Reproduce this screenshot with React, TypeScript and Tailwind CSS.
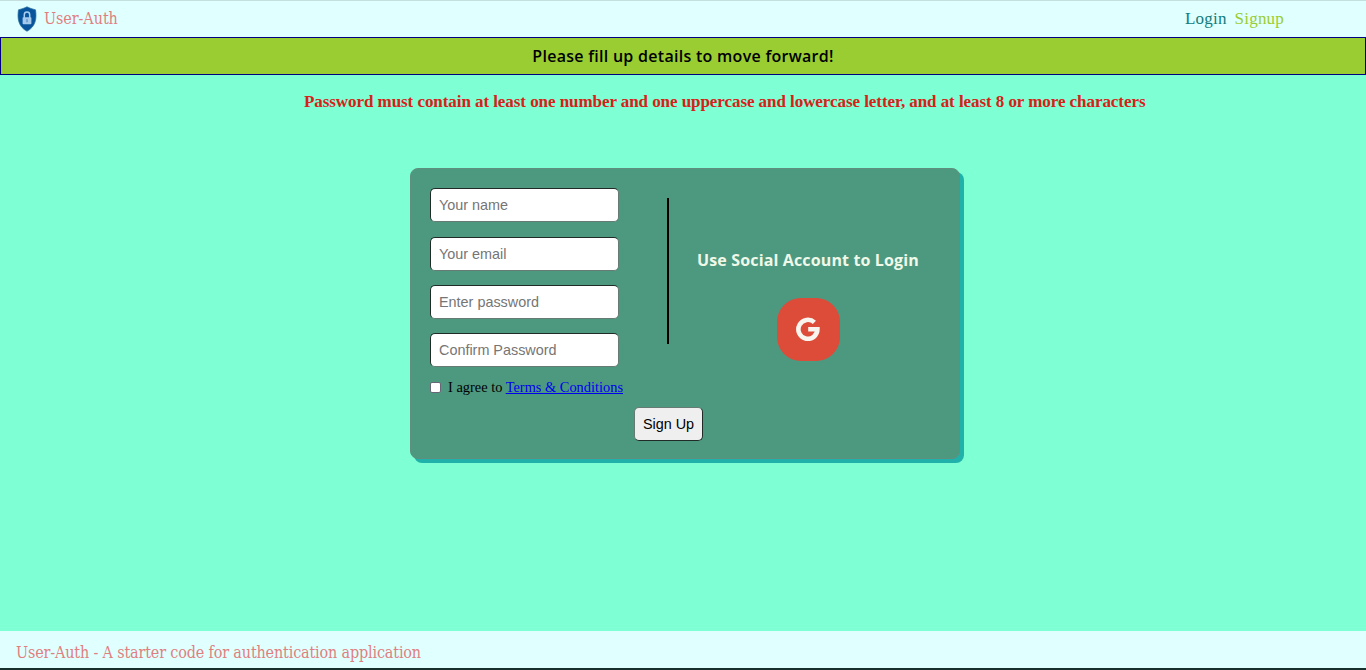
const fields = [
  { label: "Your name", type: "text", gap: "mb-[15px]" },
  { label: "Your email", type: "email", gap: "mb-[14px]" },
  { label: "Enter password", type: "password", gap: "mb-[14px]" },
  { label: "Confirm Password", type: "password", gap: "mb-[14px]" },
];

function Shield() {
  return (
    <svg width="20" height="26" viewBox="0 0 20 26" className="shrink-0">
      <path d="M10 .8C7.500 2.200 4.500 3 1.500 3.800C.2 12 1 20.500 10 25.300C19 20.500 19.800 12 18.500 3.800C15.500 3 12.500 2.200 10 .8Z" fill="#07549c" stroke="#2b6f9b" strokeWidth=".7" />
      <path d="M7.300 12V8.700a2.700 2.700 0 0 1 5.400 0V12" fill="none" stroke="#a9cff0" strokeWidth="1.500" />
      <rect x="5.600" y="11.200" width="8.800" height="7" rx=".8" fill="#a3c9ec" />
      <path d="M10 13.700v2" stroke="#5f92c4" strokeWidth="1.400" strokeLinecap="round" />
    </svg>
  );
}

function GoogleMark() {
  return (
    <svg width="24" height="24" viewBox="0 0 24 24" fill="none" stroke="currentColor" strokeWidth="4.600">
      <path d="M18.400 5.400A9.500 9.500 0 1 0 21.400 12.300H12.200" />
    </svg>
  );
}

export default function App() {
  return (
    <div className="flex h-[670px] w-full flex-col overflow-hidden border-t border-[#c5dede] bg-[#7fffd4] font-['Liberation_Serif',serif] text-base text-black">
      <header className="flex h-9 shrink-0 items-center justify-between bg-[#e0ffff] pl-[17px] pr-[82px]">
        <div className="flex items-center gap-[7px]">
          <Shield />
          <span className="font-['DejaVu_Serif_Condensed','DejaVu_Serif',serif] text-[16px] leading-5 tracking-[-0.08px] text-[#e17f80]">User-Auth</span>
        </div>
        <nav className="flex gap-[8px] text-[17px] leading-5 tracking-[0.2px]">
          <a href="#login" className="text-[#107c7c]">Login</a>
          <a href="#signup" className="text-[#9acd32]">Signup</a>
        </nav>
      </header>
      <div className="flex h-[38px] shrink-0 items-center justify-center border border-[#000080] bg-[#9acd32] font-['Open_Sans',sans-serif] text-base font-semibold tracking-[0.28px]">
        <h1>Please fill up details to move forward!</h1>
      </div>
      <p className="mt-[17px] h-5 shrink-0 pl-[304px] text-[17px] font-bold leading-5 tracking-[-0.063px] text-[#d62118] whitespace-nowrap">
        Password must contain at least one number and one uppercase and lowercase letter, and at least 8 or more characters
      </p>
      <main className="ml-[410px] mt-14 flex h-[291px] w-[550px] shrink-0 flex-col rounded-[8px] border border-[#5f907f] bg-[#4d9980] px-[19px] pt-[19px] shadow-[4px_4px_0_#20b2aa]">
        <div className="flex h-[189px]">
          <form className="w-[189px]">
            {fields.map((f) => (
              <input key={f.label} type={f.type} placeholder={f.label} className={`${f.gap} block h-[34px] w-[189px] rounded-[5px] border border-t-[#202b27] border-l-[#202b27] border-r-[#667b73] border-b-[#667b73] bg-white px-2 font-['Liberation_Sans',sans-serif] text-[14.4px] placeholder:text-[#757575]`} />
            ))}
          </form>
          <div className="ml-12 mt-[10px] h-[146px] w-[2px] shrink-0 bg-black" />
          <section className="flex flex-1 flex-col items-center pl-[7px] pt-[60px]">
            <h2 className="h-6 font-['Open_Sans',sans-serif] text-base font-bold leading-6 tracking-[0.14px] text-[#f0f8e8] whitespace-nowrap">Use Social Account to Login</h2>
            <button aria-label="Google" className="mt-[26px] flex size-[63px] shrink-0 items-center justify-center rounded-[24px] bg-[#dd4b39] pb-px text-[#f8f4ee]">
              <GoogleMark />
            </button>
          </section>
        </div>
        <label className="flex h-5 items-center text-[14.4px] leading-5">
          <input type="checkbox" className="mr-[7px] size-[11px] appearance-none rounded-[2px] border border-[#667] bg-white" />
          <span>I agree to <a href="#terms" className="text-[#0000ee] underline">Terms &amp; Conditions</a></span>
        </label>
        <button className="ml-[204px] mt-[10px] h-[34px] w-[69px] rounded-[5px] border border-t-[#667b73] border-l-[#667b73] border-r-[#202b27] border-b-[#202b27] bg-[#efefef] pt-px font-['Liberation_Sans',sans-serif] text-[14.4px]">Sign Up</button>
      </main>
      <footer className="mt-auto flex h-[39px] shrink-0 items-center border-b-2 border-[#17302b] bg-[#e0ffff] pl-4 pt-[6px] font-['DejaVu_Serif_Condensed','DejaVu_Serif',serif] text-[16px] leading-5 tracking-[-0.16px] text-[#e17f80]">
        User-Auth - A starter code for authentication application
      </footer>
    </div>
  );
}
